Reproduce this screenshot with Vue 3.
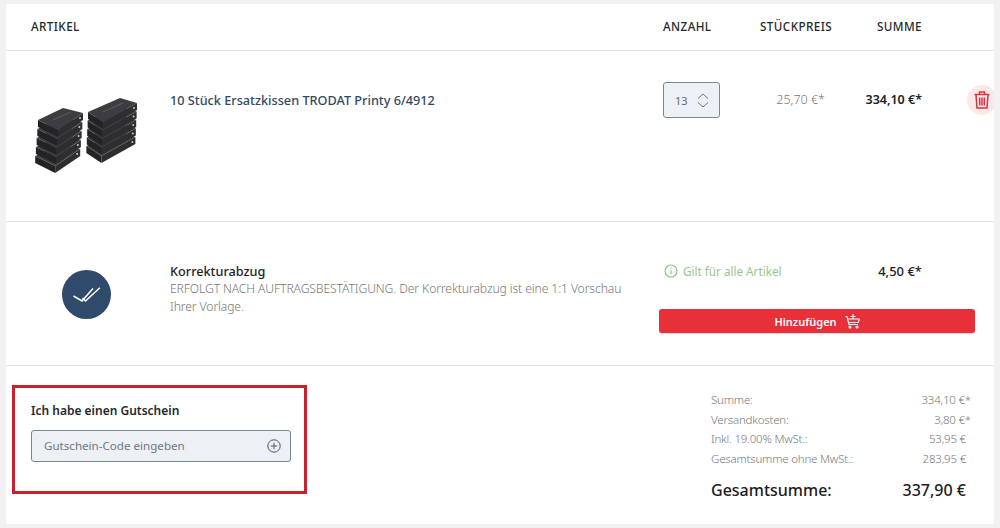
<script setup>
const totals = [
  { label: 'Summe:', value: '334,10 €*' },
  { label: 'Versandkosten:', value: '3,80 €*' },
  { label: 'Inkl. 19.00% MwSt.:', value: '53,95 €', net: true },
  { label: 'Gesamtsumme ohne MwSt.:', value: '283,95 €', net: true },
]

// Kissen von unten nach oben
const leftStack = [4, 3, 2, 1, 0]
const rightStack = [4, 3, 2, 1, 0]
</script>

<template>
  <div class="page">
    <div class="card">
      <div class="row head">
        <div class="col-item">ARTIKEL</div>
        <div class="col-qty">ANZAHL</div>
        <div class="col-price">STÜCKPREIS</div>
        <div class="col-sum">SUMME</div>
      </div>

      <div class="row product">
        <div class="col-image">
          <svg width="112" height="80" viewBox="0 0 112 80">
            <g v-for="i in leftStack" :key="'l' + i" :transform="`translate(${-i * 0.7} ${i * 9})`">
              <path d="M7 25 L27 35 L27 42 L7 32 Z" fill="#232325" />
              <path d="M27 35 L52 18 L52 25 L27 42 Z" fill="#2e2e31" />
              <path d="M7 25 L32 13 L52 18 L27 35 Z" fill="#3d3d41" />
              <path d="M22 25 L40 17" stroke="#66666a" stroke-width="0.8" />
              <circle cx="49" cy="23" r="1" fill="#c8c8c8" />
            </g>
            <g v-for="i in rightStack" :key="'r' + i" :transform="`translate(${-i * 0.4} ${i * 8.5})`">
              <path d="M57 17 L72 27 L72 34 L57 24 Z" fill="#232325" />
              <path d="M72 27 L106 8 L106 15 L72 34 Z" fill="#2e2e31" />
              <path d="M57 17 L89 3 L106 8 L72 27 Z" fill="#3d3d41" />
              <path d="M72 17 L92 8" stroke="#66666a" stroke-width="0.8" />
              <circle cx="103" cy="13" r="1" fill="#c8c8c8" />
            </g>
          </svg>
        </div>
        <div class="col-name"><a class="name">10 Stück Ersatzkissen TRODAT Printy 6/4912</a></div>
        <div class="col-qty">
          <div class="qty">
            <span>13</span>
            <svg width="12" height="15" viewBox="0 0 12 15" fill="none" stroke="#6f7a85" stroke-width="1">
              <path d="M1 5.5 L6 1 L11 5.5" />
              <path d="M1 9.5 L6 14 L11 9.5" />
            </svg>
          </div>
        </div>
        <div class="col-price unit">25,70 €*</div>
        <div class="col-sum strong">334,10 €*</div>
        <div class="trash">
          <svg width="16" height="18" viewBox="0 0 16 18" fill="none" stroke="#e0303c" stroke-width="1.5">
            <path d="M0.5 3.5 H15.5" />
            <path d="M5.5 3 V1 H10.5 V3" />
            <path d="M2 4 L3 17 H13 L14 4" />
            <path d="M5.7 6.5 V14.5 M8 6.5 V14.5 M10.3 6.5 V14.5" />
          </svg>
        </div>
      </div>

      <div class="row extra">
        <div class="col-image">
          <div class="badge">
            <svg width="28" height="18" viewBox="0 0 28 18" fill="none" stroke="#fff" stroke-width="1.5">
              <path d="M0.5 10 L9 15 L20 2.5" />
              <path d="M9.5 12 L12.5 15 L26.8 1.7" />
            </svg>
          </div>
        </div>
        <div class="col-name extra-text">
          <div class="extra-title">Korrekturabzug</div>
          <p>ERFOLGT NACH AUFTRAGSBESTÄTIGUNG. Der Korrekturabzug ist eine 1:1 Vorschau Ihrer Vorlage.</p>
        </div>
        <div class="extra-side">
          <div class="extra-top">
            <div class="valid">
              <svg width="14" height="14" viewBox="0 0 14 14" fill="none" stroke="#8cc084" stroke-width="1.1">
                <circle cx="7" cy="7" r="6" />
                <path d="M7 6 V10.2 M7 3.6 V4.8" />
              </svg>
              Gilt für alle Artikel
            </div>
            <div class="strong extra-price">4,50 €*</div>
          </div>
          <button class="add">
            Hinzufügen
            <svg width="15" height="15" viewBox="0 0 15 15" fill="none" stroke="#fff" stroke-width="1.1">
              <path d="M0.5 2.5 H2 L4 10.5 H13" />
              <path d="M2.6 5 H14.5 L13.2 8.5 H3.5" />
              <path d="M8 0 V5 M5.5 2.5 H10.5" />
              <circle cx="5" cy="13" r="1" />
              <circle cx="12" cy="13" r="1" />
            </svg>
          </button>
        </div>
      </div>

      <div class="foot">
        <div class="voucher">
          <label>Ich habe einen Gutschein</label>
          <div class="voucher-input">
            <span>Gutschein-Code eingeben</span>
            <svg width="14" height="14" viewBox="0 0 14 14" fill="none" stroke="#4a5560" stroke-width="1">
              <circle cx="7" cy="7" r="6.2" />
              <path d="M7 3.8 V10.2 M3.8 7 H10.2" />
            </svg>
          </div>
        </div>
        <div class="totals">
          <div v-for="t in totals" :key="t.label" class="line" :class="{ net: t.net }">
            <span>{{ t.label }}</span>
            <span class="amount">{{ t.value }}</span>
          </div>
          <div class="grand">
            <span>Gesamtsumme:</span>
            <span>337,90 €</span>
          </div>
        </div>
      </div>
    </div>
  </div>
</template>

<style>
body {
  margin: 0;
  background: #f1f1f1;
}
</style>

<style scoped>
.page {
  height: 528px;
  padding: 4px 6px;
  box-sizing: border-box;
  font-family: "Noto Sans", "Open Sans", sans-serif;
  color: #222;
}

.card {
  height: 520px;
  background: #fff;
  overflow: hidden;
  position: relative;
}

.row {
  display: grid;
  grid-template-columns: 25px 139px 493px 97px 72px 90px;
  border-bottom: 1px solid #e4e4e4;
  box-sizing: border-box;
}

.row > :first-child {
  grid-column: 2;
}

.head {
  height: 47px;
  padding-bottom: 2px;
  align-items: center;
  font-size: 11.7px;
  font-weight: 500;
  letter-spacing: 0.4px;
  color: #26282b;
}

.head .col-item {
  grid-column: 2 / 4;
}

.head .col-price {
  white-space: nowrap;
}

.head .col-sum {
  text-align: right;
}

.product {
  height: 171px;
  position: relative;
}

.col-image {
  display: flex;
}

.product .col-image {
  padding-top: 44px;
}

.name {
  display: block;
  margin-top: 39px;
  font-size: 12.7px;
  font-weight: 500;
  line-height: 20px;
  color: #33485f;
}

.product .col-qty {
  padding-top: 31px;
}

.qty {
  width: 57px;
  height: 36px;
  box-sizing: border-box;
  display: flex;
  align-items: center;
  gap: 9px;
  padding-left: 11px;
  border: 1px solid #7a8794;
  border-radius: 3px;
  background: #edf0f5;
  font-size: 11px;
  color: #5f6b76;
}

.unit,
.product .strong {
  margin-top: 39px;
  line-height: 20px;
  font-size: 12.5px;
  text-align: right;
  white-space: nowrap;
}

.unit {
  color: #777;
  font-weight: 300;
  padding-right: 7px;
}

.strong {
  font-weight: 600;
  color: #222;
  text-align: right;
}

.trash {
  position: absolute;
  left: 961px;
  top: 34px;
  width: 30px;
  height: 30px;
  border-radius: 50%;
  background: #fbe9ea;
  display: flex;
  align-items: center;
  justify-content: center;
}

.extra {
  height: 144px;
  grid-template-columns: 25px 139px 489px 1fr;
}

.extra .col-image {
  padding: 48px 0 0 31px;
}

.badge {
  width: 49px;
  height: 49px;
  border-radius: 50%;
  background: #2f4a6b;
  display: flex;
  align-items: center;
  justify-content: center;
}

.extra-text {
  padding: 40px 20px 0 0;
  font-size: 12.15px;
  line-height: 18px;
  color: #777;
}

.extra-title {
  font-size: 12.7px;
  font-weight: 500;
  color: #1e1e1e;
}

.extra-text p {
  margin: 0;
  line-height: 18px;
  font-weight: 300;
  letter-spacing: -0.1px;
}

.extra-side {
  padding-top: 39px;
  width: 316px;
}

.extra-top {
  display: flex;
  height: 48px;
  padding: 0 53px 0 5px;
  justify-content: space-between;
}

.valid {
  display: flex;
  align-items: center;
  gap: 5px;
  height: 20px;
  font-size: 11.7px;
  color: #98c68f;
}

.extra-price {
  font-size: 13px;
  font-weight: 500;
  line-height: 21px;
}

.add {
  width: 316px;
  height: 24px;
  display: flex;
  align-items: center;
  justify-content: center;
  gap: 8px;
  border: 0;
  border-radius: 3px;
  background: #e8303a;
  color: #fff;
  font-family: inherit;
  font-size: 11px;
  font-weight: 600;
  box-shadow: 0 1px 1px rgba(0, 0, 0, 0.15);
}

.foot {
  display: flex;
  justify-content: space-between;
  padding: 19px 23px 0 6px;
}

.voucher {
  width: 295px;
  height: 109px;
  box-sizing: border-box;
  border: 3px solid #c9202e;
  padding: 13px 13px 0 16px;
}

.voucher label {
  display: block;
  font-size: 12px;
  font-weight: 600;
  line-height: 20px;
  color: #26282b;
}

.voucher-input {
  margin-top: 9px;
  height: 32px;
  box-sizing: border-box;
  display: flex;
  align-items: center;
  justify-content: space-between;
  padding: 0 9px 1px 12px;
  border: 1px solid #7a8794;
  border-radius: 3px;
  background: #edf0f5;
  font-size: 11.6px;
  color: #6d7782;
}

.totals {
  width: 260px;
  padding-top: 5px;
}

.line {
  display: flex;
  justify-content: space-between;
  height: 19.5px;
  align-items: center;
  font-size: 11.5px;
  font-weight: 300;
  letter-spacing: -0.2px;
  color: #777;
}

.line.net .amount {
  margin-right: 5px;
}

.grand {
  display: flex;
  justify-content: space-between;
  margin-top: 10px;
  padding-right: 5px;
  font-size: 16px;
  line-height: 24px;
  font-weight: 500;
  color: #1c1c1c;
}
</style>
